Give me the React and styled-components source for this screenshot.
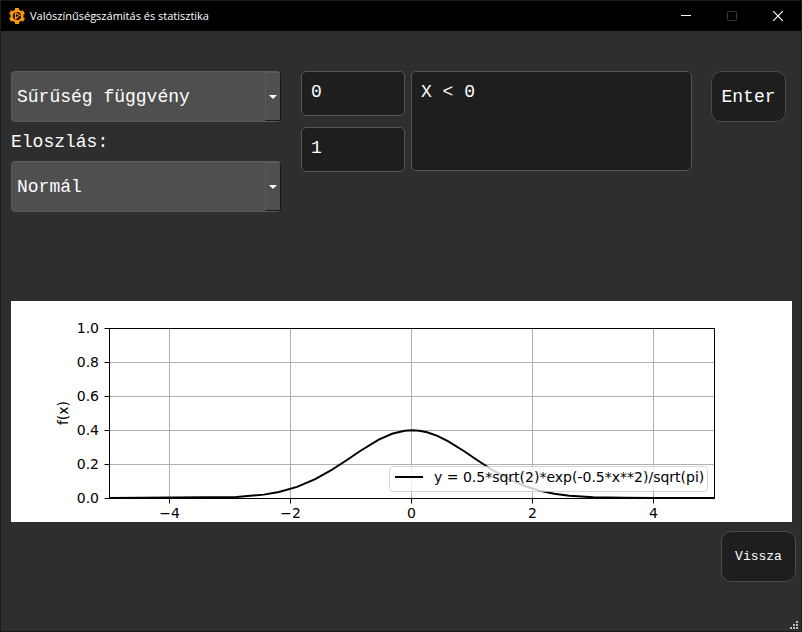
import React from "react";
import styled, { createGlobalStyle } from "styled-components";

const GlobalStyle = createGlobalStyle`
  * { box-sizing: border-box; }
  body { margin: 0; background: #2e2e2e; }
`;

const mono = `"Liberation Mono", "Courier New", monospace`;

const Window = styled.div`
  display: flex;
  flex-direction: column;
  min-height: 100vh;
  border: 1px solid #1b1b1b;
  background: #2e2e2e;
  color: #fff;
  font-family: ${mono};
  font-size: 18px;
`;

const TitleBar = styled.header`
  display: flex;
  align-items: center;
  height: 30px;
  padding-left: 8px;
  background: #000;
`;

const Title = styled.h1`
  flex: 1;
  margin: 0 0 0 5px;
  font: 400 11px/16px "Open Sans", "Noto Sans", sans-serif;
`;

const CaptionButton = styled.button`
  display: grid;
  place-items: center;
  width: 46px;
  height: 30px;
  padding: 0;
  border: 0;
  background: none;
  color: ${(p) => (p.disabled ? "#333" : "#fff")};
`;

const Form = styled.form`
  display: flex;
  align-items: flex-start;
  padding: 40px 15px 0 10px;
`;

const Distribution = styled.div`
  display: flex;
  flex-direction: column;
  width: 270px;
  margin-right: 20px;
`;

const Label = styled.label`
  padding-top: 1px;
  line-height: 38px;
`;

const SelectBox = styled.div`
  position: relative;
  display: flex;
`;

const Select = styled.select`
  appearance: none;
  width: 100%;
  height: 51px;
  padding: 0 20px 0 5px;
  border: 1px solid #5a5a5a;
  border-radius: 4px;
  background: #4f4f4f;
  color: #fff;
  font: inherit;
`;

const Arrow = styled.span`
  position: absolute;
  top: 1px;
  right: 0;
  bottom: 1px;
  display: grid;
  place-items: center;
  width: 16px;
  border: 1px solid #5c5c5c;
  border-right-color: #191919;
  border-bottom-color: #191919;
  background: #4f4f4f;
  pointer-events: none;
`;

const Params = styled.div`
  display: grid;
  gap: 11px;
  width: 104px;
  margin-right: 6px;
`;

const Field = styled.textarea`
  display: block;
  width: 100%;
  height: ${(p) => (p.$tall ? 100 : 45)}px;
  padding: 10px 9px;
  border: 1px solid #565656;
  border-radius: 5px;
  background: #1e1e1e;
  color: #fff;
  font: inherit;
  line-height: 20px;
  resize: none;
  overflow: hidden;
`;

const Condition = styled.div`
  flex: 1;
  margin-right: 19px;
`;

const Button = styled.button`
  width: 75px;
  height: 51px;
  padding: 0;
  border: 1px solid #4b4b4b;
  border-radius: 10px;
  background: #1e1e1e;
  color: #fff;
  font-family: inherit;
  font-size: ${(p) => (p.$small ? 13 : 18)}px;
`;

const Figure = styled.figure`
  margin: 89px 9px 0 10px;
  background: #fff;
`;

const Chart = styled.svg`
  display: block;
  width: 100%;
  height: auto;
  font-family: "DejaVu Sans", sans-serif;
  font-size: 14px;
`;

const Footer = styled.footer`
  display: flex;
  justify-content: flex-end;
  padding: 9px 5px 0;
`;

const Grip = styled.svg`
  align-self: flex-end;
  margin: auto 3px 2px 0;
`;

const left = 98.5;
const right = 703.5;
const top = 27.5;
const bottom = 197.5;
const toX = (x) => left + ((x + 5) * (right - left)) / 10;
const toY = (y) => bottom - y * (bottom - top);
const density = (x) => Math.exp(-0.5 * x * x) / Math.sqrt(2 * Math.PI);

const samples = [
  -5, -2.9, -2.45, -2.2, -1.9, -1.6, -1.35, -1.1, -0.85, -0.55, -0.33, -0.12, 0,
  0.12, 0.25, 0.42, 0.6, 0.85, 1.1, 1.35, 1.6, 1.85, 2.1, 2.35, 2.6, 3, 3.5, 4, 5,
];
const curve = samples.map((x) => `${toX(x)},${toY(density(x)) - 0.5}`).join(" ");
const xTicks = [-4, -2, 0, 2, 4];
const yTicks = [0, 0.2, 0.4, 0.6, 0.8, 1];

function DensityChart() {
  return (
    <Chart viewBox="0 0 781 221" role="img" aria-label="f(x)">
      {xTicks.map((t) => {
        const x = Math.floor(toX(t)) - 0.5;
        return (
          <g key={t}>
            <line x1={x} x2={x} y1={top} y2={bottom} stroke="#b0b0b0" />
            <line x1={x} x2={x} y1={bottom} y2={bottom + 5} stroke="#000" />
            <text x={x} y="217" textAnchor="middle">
              {String(t).replace("-", "−")}
            </text>
          </g>
        );
      })}
      {yTicks.map((t) => (
        <g key={t}>
          <line x1={left} x2={right} y1={toY(t)} y2={toY(t)} stroke="#b0b0b0" />
          <line x1={left - 5} x2={left} y1={toY(t)} y2={toY(t)} stroke="#000" />
          <text x="88" y={toY(t) + 4} textAnchor="end">
            {t.toFixed(1)}
          </text>
        </g>
      ))}
      <text transform="translate(57 112) rotate(-90)" textAnchor="middle">
        f(x)
      </text>
      <clipPath id="plot">
        <rect x={left} y={top} width={right - left} height={bottom - top} />
      </clipPath>
      <polyline points={curve} fill="none" stroke="#000" strokeWidth="2" clipPath="url(#plot)" />
      <rect x={left} y={top} width={right - left} height={bottom - top} fill="none" stroke="#000" />
      <rect x="378.5" y="165.5" width="318" height="25" rx="3" fill="#fff" stroke="#ccc" opacity="0.8" />
      <line x1="384" x2="412" y1="176" y2="176" stroke="#000" strokeWidth="2" />
      <text x="423" y="181">
        y = 0.5*sqrt(2)*exp(-0.5*x**2)/sqrt(pi)
      </text>
    </Chart>
  );
}

function GearIcon() {
  return (
    <svg width="16" height="16" viewBox="0 0 16 16" aria-hidden="true">
      <g fill="#ff9800">
        {[0, 60, 120].map((a) => (
          <rect key={a} x="6" y="0" width="4" height="16" transform={`rotate(${a} 8 8)`} />
        ))}
        <circle cx="8" cy="8" r="6.5" />
      </g>
      <circle cx="8" cy="8" r="4" fill="#000" />
      <path d="M6.5 4.5v7M6.5 4.8l5 3.2M6.5 11l3-3" fill="none" stroke="#ff9800" strokeWidth="1.3" />
    </svg>
  );
}

function Dropdown({ id, label, options }) {
  return (
    <SelectBox>
      <Select id={id} aria-label={label}>
        {options.map((o) => (
          <option key={o}>{o}</option>
        ))}
      </Select>
      <Arrow>
        <svg width="8" height="4" viewBox="0 0 8 4" aria-hidden="true">
          <path d="M0 0h8L4 4z" fill="#fff" />
        </svg>
      </Arrow>
    </SelectBox>
  );
}

export default function App() {
  return (
    <Window>
      <GlobalStyle />
      <TitleBar>
        <GearIcon />
        <Title>Valószínűségszámitás és statisztika</Title>
        <CaptionButton aria-label="Kis méret">
          <svg width="10" height="10" viewBox="0 0 10 10">
            <path d="M0 4.5h10" stroke="currentColor" />
          </svg>
        </CaptionButton>
        <CaptionButton aria-label="Teljes méret" disabled>
          <svg width="10" height="10" viewBox="0 0 10 10">
            <path d="M.5.5h9v9h-9z" fill="none" stroke="currentColor" />
          </svg>
        </CaptionButton>
        <CaptionButton aria-label="Bezárás">
          <svg width="10" height="10" viewBox="0 0 10 10">
            <path d="M0 0l10 10M10 0L0 10" stroke="currentColor" strokeWidth="1.2" />
          </svg>
        </CaptionButton>
      </TitleBar>
      <Form onSubmit={(e) => e.preventDefault()}>
        <Distribution>
          <Dropdown id="kind" label="Függvény" options={["Sűrűség függvény"]} />
          <Label htmlFor="distribution">Eloszlás:</Label>
          <Dropdown id="distribution" options={["Normál"]} />
        </Distribution>
        <Params>
          <Field aria-label="Várható érték" defaultValue="0" />
          <Field aria-label="Szórás" defaultValue="1" />
        </Params>
        <Condition>
          <Field $tall aria-label="Feltétel" defaultValue="X < 0" />
        </Condition>
        <Button type="submit">Enter</Button>
      </Form>
      <Figure>
        <DensityChart />
      </Figure>
      <Footer>
        <Button type="button" $small>Vissza</Button>
      </Footer>
      <Grip width="8" height="8" viewBox="0 0 8 8" aria-hidden="true">
        <path d="M6 0h2v2H6zM3 3h2v2H3zM6 3h2v2H6zM0 6h2v2H0zM3 6h2v2H3zM6 6h2v2H6z" fill="#bdbdbd" />
      </Grip>
    </Window>
  );
}
